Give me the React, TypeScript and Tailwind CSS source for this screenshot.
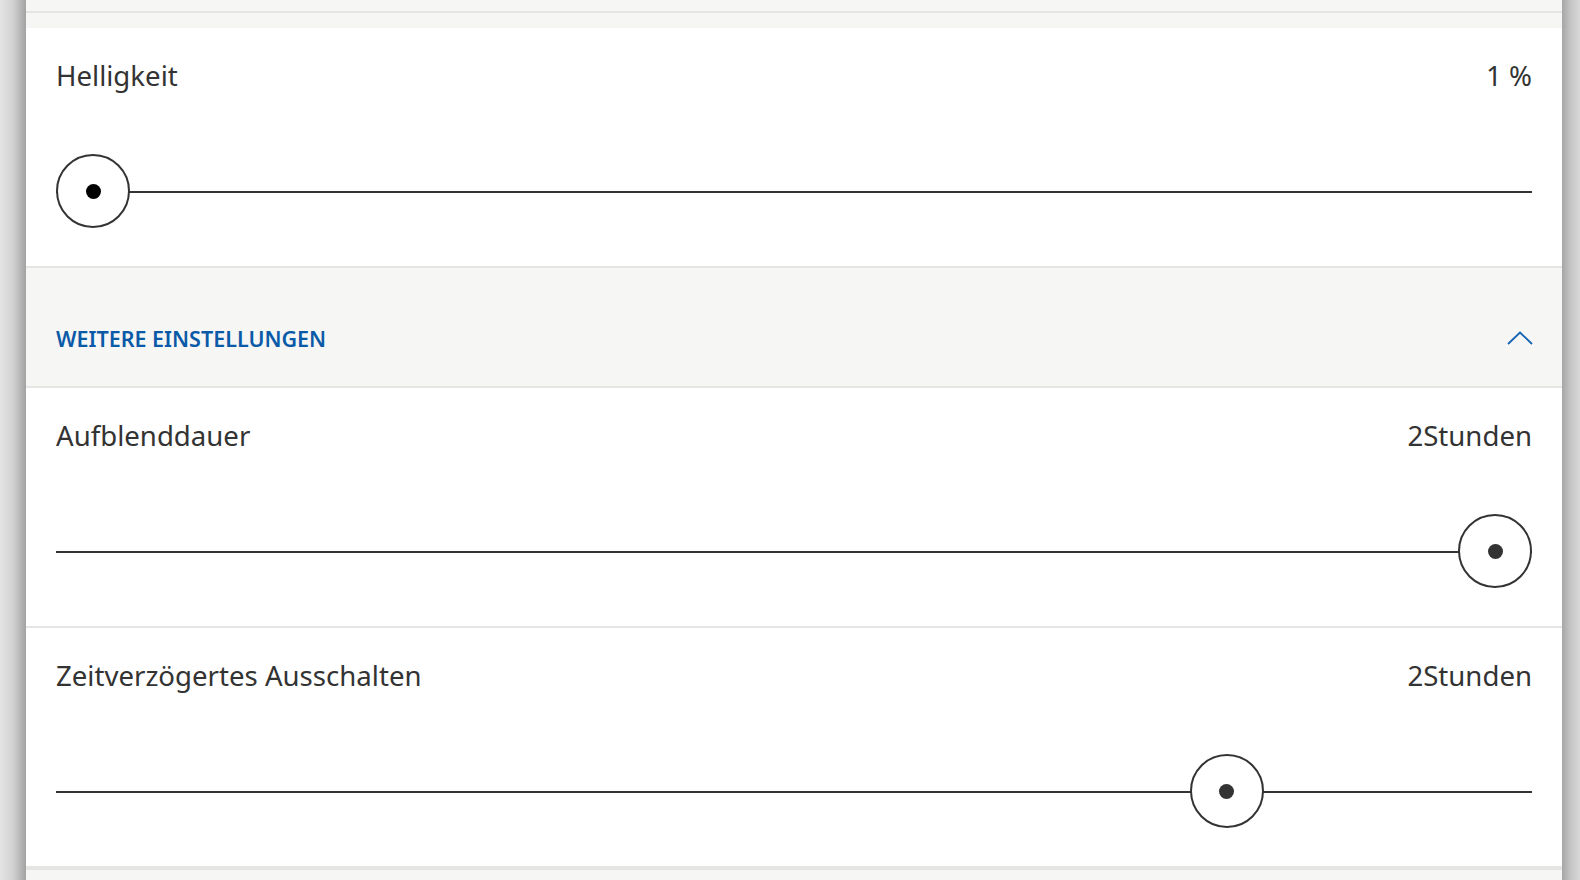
import React from "react";

const font = { fontFamily: '"Noto Sans", "Open Sans", sans-serif' };

function Slider({ frac, dark }: { frac: number; dark?: boolean }) {
  return (
    <div className="relative h-[74px] mt-[63px]">
      <div className="absolute left-0 right-0 top-[37px] h-[2px] bg-[#333333]" />
      <div
        className="absolute top-0 w-[74px] h-[74px] rounded-full border-2 border-[#333333] bg-white flex items-center justify-center"
        style={{ left: `calc((100% - 74px) * ${frac})` }}
      >
        <div className={`w-[15px] h-[15px] rounded-full ${dark ? "bg-black" : "bg-[#333333]"}`} />
      </div>
    </div>
  );
}

function Section({
  label,
  value,
  frac,
  dark,
  border = "border-b-[2px]",
}: {
  label: string;
  value: string;
  frac: number;
  dark?: boolean;
  border?: string;
}) {
  return (
    <div className={`bg-white px-[30px] pt-[31px] pb-[38px] ${border} border-[#e5e5e3]`}>
      <div className="flex justify-between items-center h-[32px] text-[27.6px] leading-[31px] text-[#333333]">
        <span>{label}</span>
        <span>{value}</span>
      </div>
      <Slider frac={frac} dark={dark} />
    </div>
  );
}

export default function App() {
  return (
    <div className="w-[1580px] h-[880px] flex overflow-hidden bg-[#f6f6f4]" style={font}>
      <div className="w-[26px] h-full bg-gradient-to-r from-[#e4e4e4] via-[#d2d2d2] to-[#a2a2a2]" />
      <div className="flex-1 flex flex-col bg-[#f6f6f4]">
        <div className="h-[28px] flex flex-col">
          <div className="h-[11px]" />
          <div className="h-[2px] bg-[#e5e5e3]" />
        </div>
        <Section label="Helligkeit" value="1 %" frac={0} dark />
        <div className="h-[120px] px-[30px] pt-[56px] flex justify-between items-start border-b-[2px] border-[#e5e5e3] bg-[#f6f6f4]">
          <span className="text-[21.5px] leading-[30px] font-semibold text-[#0a5aa8]">
            WEITERE EINSTELLUNGEN
          </span>
          <svg width="26" height="14" viewBox="0 0 26 14" className="mt-[7px] mr-[-1px]">
            <path d="M1 13 L13 1.5 L25 13" fill="none" stroke="#1563b3" strokeWidth="1.8" />
          </svg>
        </div>
        <Section label="Aufblenddauer" value="2Stunden" frac={1} />
        <Section label="Zeitverzögertes Ausschalten" value="2Stunden" frac={0.8087} border="border-b-[4px]" />
      </div>
      <div className="w-[18px] h-full bg-gradient-to-r from-[#a6a6a6] via-[#c6c6c6] to-[#d8d8d8]" />
    </div>
  );
}
